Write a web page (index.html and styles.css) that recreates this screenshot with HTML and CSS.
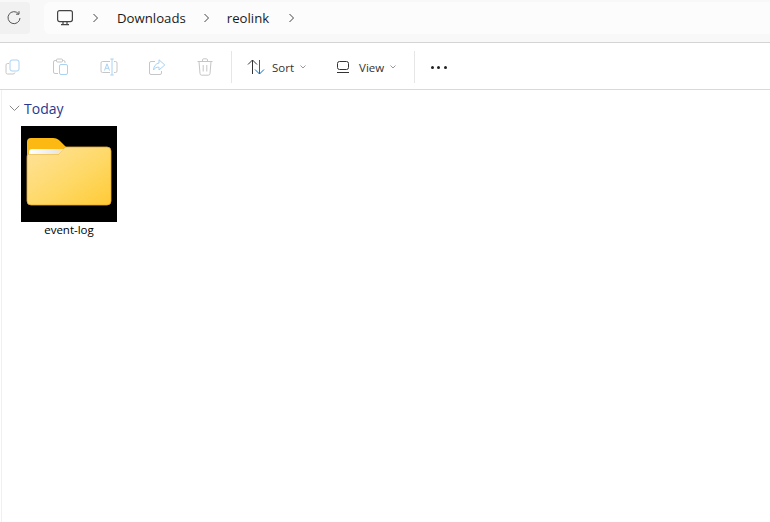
FILE: index.html
```html
<!DOCTYPE html>
<html lang="en">
<head>
<meta charset="utf-8">
<title>reolink</title>
<link rel="stylesheet" href="styles.css">
</head>
<body>
<header class="addressbar">
  <button class="refresh" aria-label="Refresh">
    <svg width="16" height="16" viewBox="0 0 16 16" fill="none" stroke="#555" stroke-width="1"><path d="M12.600 3.800A6 6 0 1 0 14 8"/><path d="M13 1.200v3h-3"/></svg>
  </button>
  <nav class="crumbs">
    <svg class="pc" width="18" height="18" viewBox="0 0 18 18" fill="none" stroke="#444" stroke-width="1.200"><rect x="1.600" y="1.600" width="14.800" height="11" rx="2"/><path d="M5 15.600h8M7 13v2.400M11 13v2.400"/></svg>
    <svg class="chev first" width="8" height="12" viewBox="0 0 8 12" fill="none" stroke="#444" stroke-width="1"><path d="M1.500 2 5.500 6l-4 4"/></svg>
    <span class="crumb">Downloads</span>
    <svg class="chev" width="8" height="12" viewBox="0 0 8 12" fill="none" stroke="#444" stroke-width="1"><path d="M1.500 2 5.500 6l-4 4"/></svg>
    <span class="crumb second">reolink</span>
    <svg class="chev" width="8" height="12" viewBox="0 0 8 12" fill="none" stroke="#444" stroke-width="1"><path d="M1.500 2 5.500 6l-4 4"/></svg>
  </nav>
</header>
<section class="toolbar">
  <div class="disabled-group">
    <svg width="16" height="16" viewBox="0 0 16 16" fill="none"><path d="M4 4.500H2.600A1.600 1.600 0 0 0 1 6v7.400A1.600 1.600 0 0 0 2.600 15H8a2 2 0 0 0 2-1.500" stroke="#c6c6c6"/><rect x="5" y="1" width="9" height="11" rx="2" stroke="#a9d2f3"/></svg>
    <svg width="18" height="18" viewBox="0 0 18 18" fill="none"><path d="M6 15.500H3a1.500 1.500 0 0 1-1.500-1.500V4A1.500 1.500 0 0 1 3 2.500h2M10 2.500h1.500A1.500 1.500 0 0 1 13 4v1" stroke="#c6c6c6"/><rect x="4.500" y="1" width="6" height="3" rx="1" stroke="#c6c6c6"/><rect x="7.500" y="6.500" width="8" height="10" rx="1.500" stroke="#a9d2f3"/></svg>
    <svg width="18" height="18" viewBox="0 0 18 18" fill="none"><path d="M10 3.500H2.500A1.500 1.500 0 0 0 1 5v8a1.500 1.500 0 0 0 1.500 1.500H10M14 3.500h1.500A1.500 1.500 0 0 1 17 5v8a1.500 1.500 0 0 1-1.500 1.500H14" stroke="#c6c6c6"/><path d="M12 1v16M10.300 1h3.400M10.300 17h3.400M4.500 12.500 7 5.800l2.500 6.700M5.400 10.300h3.200" stroke="#a9d2f3"/></svg>
    <svg width="18" height="18" viewBox="0 0 18 18" fill="none"><path d="M7 3.500H3A1.500 1.500 0 0 0 1.500 5v10A1.500 1.500 0 0 0 3 16.500h9a1.500 1.500 0 0 0 1.500-1.500v-2" stroke="#c6c6c6"/><path d="M11 1.800 16.800 7 11 12V9.200C8.500 9 6.700 10 5.500 12 5.600 8.500 7.800 5.500 11 5z" stroke="#a9d2f3"/></svg>
    <svg width="16" height="18" viewBox="0 0 16 18" fill="none" stroke="#c6c6c6"><path d="M.5 3.500h15M5.500 3.500V2A1.200 1.200 0 0 1 6.700.800h2.600A1.200 1.200 0 0 1 10.500 2v1.500M2 3.500l1 12a1.800 1.800 0 0 0 1.800 1.700h6.400a1.800 1.800 0 0 0 1.800-1.700l1-12M6.200 7v6.500M9.800 7v6.500"/></svg>
  </div>
  <span class="sep"></span>
  <div class="tool sort">
    <svg width="18" height="16" viewBox="0 0 18 16" fill="none"><path d="M1 5.500 5.500 1 10 5.500M5.500 1v14" stroke="#333"/><path d="M8 10.500 12.500 15l4.500-4.500M12.500 15V1" stroke="#0f6cbd"/></svg>
    <span>Sort</span>
    <svg class="caret" width="6" height="4" viewBox="0 0 6 4" fill="none" stroke="#999"><path d="M.500.500 3 3 5.500.500"/></svg>
  </div>
  <div class="tool view">
    <svg width="14" height="12" viewBox="0 0 14 12" fill="none" stroke="#333"><rect x="1.500" y=".500" width="11" height="8" rx="2"/><path d="M1 11.500h12"/></svg>
    <span>View</span>
    <svg class="caret" width="6" height="4" viewBox="0 0 6 4" fill="none" stroke="#999"><path d="M.500.500 3 3 5.500.500"/></svg>
  </div>
  <span class="sep end"></span>
  <div class="more"><i></i><i></i><i></i></div>
</section>
<main class="content">
  <div class="group">
    <svg width="11" height="7" viewBox="0 0 11 7" fill="none" stroke="#888"><path d="M.800.800 5.500 5.500 10.200.800"/></svg>
    <span>Today</span>
  </div>
  <figure class="item">
    <svg class="thumb" width="96" height="96" viewBox="0 0 96 96">
      <defs>
        <linearGradient id="fg" x1="0" y1="0" x2="1" y2="1"><stop offset="0" stop-color="#ffe29b"/><stop offset=".55" stop-color="#fed967"/><stop offset="1" stop-color="#ffca35"/></linearGradient>
        <linearGradient id="wh" x1="0" y1="0" x2="1" y2="0"><stop offset="0" stop-color="#fff"/><stop offset=".72" stop-color="#e9e9e9"/><stop offset="1" stop-color="#ffe29b"/></linearGradient>
      </defs>
      <rect width="96" height="96" fill="#000"/>
      <path d="M6 32V16a4 4 0 0 1 4-4h22c3 0 5 1 7 3l6 6v11z" fill="#fdb913"/>
      <path d="M6 32a6 6 0 0 1 1-4h31l6-7h42a4 4 0 0 1 4 4v50a4 4 0 0 1-4 4H10a4 4 0 0 1-4-4z" fill="url(#fg)" stroke="#e2a832" stroke-width=".8"/>
      <path d="M8 26a3 3 0 0 1 3-3h32l-5 5H8z" fill="url(#wh)"/>
    </svg>
    <figcaption>event-log</figcaption>
  </figure>
</main>
</body>
</html>
```
FILE: styles.css
```css
* { box-sizing: border-box; }
html, body { margin: 0; height: 100%; }
body {
  width: 770px;
  height: 522px;
  overflow: hidden;
  background: #fff;
  font-family: "Open Sans", "Noto Sans", sans-serif;
  color: #1a1a1a;
  display: flex;
  flex-direction: column;
}
.addressbar {
  height: 43px;
  flex: none;
  background: #f8f8f8;
  border-bottom: 1px solid #d4d4d4;
  padding-top: 2px;
  display: flex;
  align-items: flex-start;
}
.refresh {
  width: 30px;
  height: 32px;
  border: 0;
  padding: 0 0 0 6px;
  background: #f1f1f1;
  border-radius: 0 4px 4px 0;
  display: flex;
  align-items: center;
}
.crumbs {
  margin-left: 14px;
  flex: 1;
  height: 32px;
  background: #fcfcfc;
  border-radius: 6px 0 0 6px;
  display: flex;
  align-items: center;
  padding-left: 12px;
  font-size: 13.200px;
}
.chev { flex: none; }
.chev.first { margin-left: 18px; }
.crumb { margin: 0 17px; }
.crumb.second { margin: 0 19px 0 16px; }
.toolbar {
  height: 47px;
  flex: none;
  border-bottom: 1px solid #d9d9d9;
  display: flex;
  align-items: center;
  padding-top: 2px;
  font-size: 11.5px;
}
.disabled-group {
  display: grid;
  grid-auto-flow: column;
  grid-auto-columns: 48px;
  justify-items: center;
  align-items: center;
  margin-left: -11px;
  width: 242px;
  flex: none;
}
.sep {
  width: 1px;
  height: 32px;
  background: #e6e6e6;
  flex: none;
}
.tool {
  display: flex;
  align-items: center;
  color: #333;
}
.sort { margin-left: 15px; }
.sort span { margin: 0 6px 0 7px; }
.view { margin-left: 30px; }
.view span { margin: 0 6px 0 9px; }
.sep.end { margin-left: 18px; }
.more {
  margin-left: 16px;
  display: flex;
  gap: 3.300px;
}
.more i {
  width: 3px;
  height: 3px;
  background: #222;
  border-radius: 50%;
}
.content {
  flex: 1;
  border-left: 1px solid #f0f0f0;
  margin-left: 1px;
  padding-left: 6px;
}
.group {
  display: flex;
  align-items: center;
  gap: 4px;
  height: 36px;
  padding: 0 0 0 1px;
  font-size: 14px;
  color: #27388f;
}
.item {
  margin: 0 0 0 13px;
  width: 96px;
  text-align: center;
}
.thumb { display: block; }
figcaption {
  margin-top: 0;
  font-size: 11.500px;
  color: #000;
}
```
